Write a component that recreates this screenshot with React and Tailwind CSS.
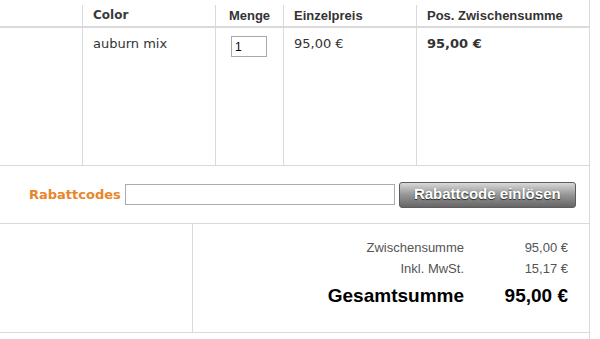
import React from "react";

const line = "border-[#dadada]";
const arial = "font-['Liberation_Sans',Arial,sans-serif]";
const dejavu = "font-['DejaVu_Sans',Verdana,sans-serif]";

const Cart = () => {
  return (
    <div className={`w-[590px] min-h-[339px] border-r ${line} bg-white text-[#333]`}>
      {/* Kopfzeile */}
      <div className={`pt-[5px] border-b-2 ${line}`}>
        <div className="grid grid-cols-[82px_133px_68px_133px_173px] h-[21px] text-[13px] leading-[21px]">
          <div />
          <div className={`border-l ${line} pl-[10px] font-bold ${dejavu} text-[12px] text-[#3a3a3a]`}>Color</div>
          <div className={`border-l ${line} text-center font-bold ${arial}`}>Menge</div>
          <div className={`border-l ${line} pl-[10px] font-bold ${arial}`}>Einzelpreis</div>
          <div className={`border-l ${line} pl-[10px] font-bold ${arial}`}>Pos. Zwischensumme</div>
        </div>
      </div>

      {/* Artikelzeile */}
      <div className={`grid grid-cols-[82px_133px_68px_133px_173px] h-[138px] border-b ${line} text-[13px] leading-4 ${dejavu}`}>
        <div />
        <div className={`border-l ${line} pl-[10px] pt-2`}>auburn mix</div>
        <div className={`border-l ${line} flex justify-center pt-2 pr-[1px]`}>
          <input
            defaultValue="1"
            className={`w-[36px] h-[21px] border border-[#a9a9a9] px-[3px] text-[12px] ${arial} text-black outline-none`}
          />
        </div>
        <div className={`border-l ${line} pl-[10px] pt-2`}>95,00 €</div>
        <div className={`border-l ${line} pl-[10px] pt-2 font-bold`}>95,00 €</div>
      </div>

      {/* Rabattcodes */}
      <div className={`flex items-center h-[58px] border-b ${line} pl-[29px]`}>
        <span className={`${dejavu} font-bold text-[13px] text-[#e8862a]`}>Rabattcodes</span>
        <input className="ml-[4px] w-[270px] h-[21px] border border-[#ababab] outline-none" />
        <button
          className={`ml-[4px] w-[177px] h-[26px] rounded-[3px] border border-[#5c5c5c] bg-gradient-to-b from-[#d9d9d9] via-[#959595] to-[#666666] text-white font-bold text-[15px] ${arial} [text-shadow:0_1px_1px_#222]`}
        >
          Rabattcode einlösen
        </button>
      </div>

      {/* Summen */}
      <div className={`flex h-[109px] border-b ${line}`}>
        <div className={`w-[193px] border-r ${line}`} />
        <div className={`flex-1 pt-[13px] pr-[21px] ${arial}`}>
          <div className="grid grid-cols-[1fr_104px] h-[21px] items-center text-[13px] text-[#555]">
            <div className="text-right">Zwischensumme</div>
            <div className="text-right">95,00 €</div>
          </div>
          <div className="grid grid-cols-[1fr_104px] h-[21px] items-center text-[13px] text-[#555]">
            <div className="text-right">Inkl. MwSt.</div>
            <div className="text-right">15,17 €</div>
          </div>
          <div className="grid grid-cols-[1fr_104px] h-[34px] items-center text-[19px] font-bold text-black">
            <div className="text-right">Gesamtsumme</div>
            <div className="text-right">95,00 €</div>
          </div>
        </div>
      </div>
    </div>
  );
};

export default function App() {
  return <Cart />;
}
